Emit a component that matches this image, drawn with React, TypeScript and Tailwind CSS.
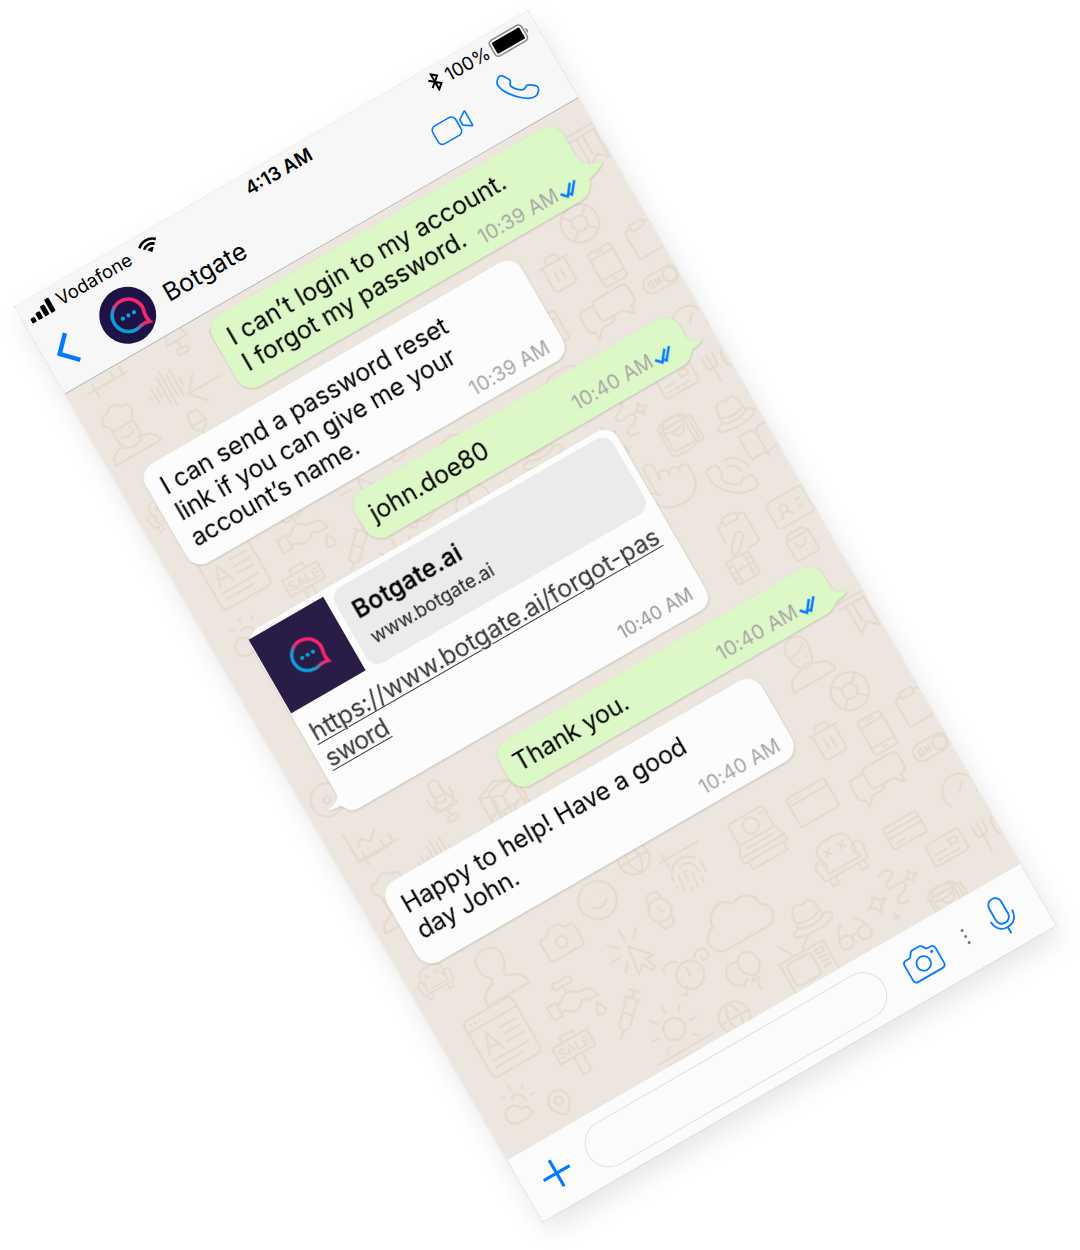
import type { ReactNode } from "react";
import {
  Bookmark, BookOpen, Camera, Clipboard, ClipboardPen, CloudSun,
  Disc, Film, Fingerprint, Gauge, Glasses, Globe, IdCard, Lamp, LifeBuoy, MapPin,
  Mic, PhoneCall, Pointer, ShoppingBag, Smile,
  Syringe, Trash2, Utensils, Watch, ChartLine, Wine,
} from "lucide-react";

const BLUE = "#0479ff";

/* ---------- wallpaper ---------- */

type Icon = typeof Bookmark;

const doodles: [Icon, number, number, number, number?][] = [
  [LifeBuoy, 531, 210, 46], [Trash2, 488, 241, 42],
  [Clipboard, 579, 254, 42], [Gauge, 576, 348, 42],
  [Utensils, 582, 403, 36], [Pointer, 478, 478, 62],
  [PhoneCall, 535, 507, 48], [BookOpen, 579, 490, 42], [IdCard, 571, 561, 50], [ClipboardPen, 513, 556, 46],
  [ShoppingBag, 563, 598, 34], [Film, 500, 590, 34],
  [Smile, 208, 805, 46], [Watch, 257, 845, 46],
  [Fingerprint, 300, 827, 40], [Globe, 260, 787, 38], [Camera, 156, 821, 46],
  [Glasses, 413, 961, 42], [Syringe, 179, 917, 46],
  [Globe, 268, 975, 38], [CloudSun, 38, 940, 44], [MapPin, 74, 962, 32],
  [Lamp, 124, 110, 34], [Wine, 101, 195, 38], [Mic, 123, 637, 44],
  [Disc, 24, 583, 40], [ChartLine, 37, 637, 44], [ShoppingBag, 513, 980, 38],
];

const Armchair = () => (
  <g>
    <path d="M-18 0v-12c0-8 5-11 18-11s18 3 18 11V0M-18 8v-4a6 6 0 1 0-9-5c0 4 2 5 2 8v6h50V7c0-3 2-4 2-8a6 6 0 1 0-9 5v4z" />
    <path d="M-20 13v8h7v-8M13 13v8h7v-8M-11-14l6 6M-5-14l-6 6M5-14l6 6M11-14l-6 6" />
  </g>
);

const hat = (
  <path d="M-14 6c0-14 2-21 8-21 3 0 4 2 7 2s4-2 7-1c5 2 5 10 6 20M-14 0c8 5 20 5 28 0M-14 6c8 5 20 5 28 0M-14 6c-12 2-9 8 0 9 9 2 22 2 29 0 9-2 10-8 0-10" />
);

const drawings: [number, number, number, ReactNode][] = [
  [439, 890, 1, <Armchair />],
  [27, 793, 0.68, <Armchair />],
  [318, 891, 1.08, <path d="M-22 20c-14-3-14-22 0-24C-22-20-2-26 5-14 16-20 28-12 26-2c12 6 8 22-4 22z" />],
  [382, 924, 1, hat],
  [568, 449, 0.95, hat],
  [581, 143, 1, <path d="M-18-14h34M-18-8h34M-11-8v32l10-9 10 9V-8M-4-8v20" />],
  [534, 260, 1, <path d="M-9-19h18q4 0 4 4v30q0 4-4 4h-18q-4 0-4-4v-30q0-4 4-4zM-13-12h26M-13 11h26M-3-16h6M-1 15h2" />],
  [573, 299, 1, <path d="M-10-9h20a9 9 0 0 1 0 18h-20a9 9 0 0 1 0-18zM3 0a7 7 0 0 1 14 0 7 7 0 0 1-14 0zM-13-3h4v6h-4zM-5 3v-6l4 6v-6" />],
  [512, 297, 1, <path d="M-6-13h28q7 0 7 7v9q0 7-7 7v9l-9-9H-6q-5 0-5-6v-11q0-6 5-6zM-11-9h-11q-6 0-6 6v12q0 6 6 6v9l8-9H-3q4 0 5-4" />],
  [537, 394, 1, <path d="M-16-12h32q3 0 3 3v18q0 3-3 3h-32q-3 0-3-3v-18q0-3 3-3zM5-6h8v6H5zM-14 1h12M-14 7h4M-6 7h4M2 7h8" />],
  [509, 898, 1, <path d="M-16-12h32q3 0 3 3v18q0 3-3 3h-32q-3 0-3-3v-18q0-3 3-3zM-19-6h38M-19 0h38M-14 7h10" />],
  [443, 828, 1, <path d="M-19-16h38q3 0 3 3v26q0 3-3 3h-38q-3 0-3-3v-26q0-3 3-3zM-22-8h44M-18-12h1M-13-12h1M-8-12h1" />],
  [506, 700, 1, <path d="M-12-9c-4-20 28-22 24 0M-10-8C-4-8 4-10 8-16M-11-8c0 22 22 22 22 0M-24 24c0-12 8-15 17-16M24 24c0-12-8-15-17-16M-24 24h48M-4-2v0M4-2v0M-3 5h6" />],
  [378, 831, 1, <path d="M-16-26h32q4 0 4 4v20h-40v-20q0-4 4-4zM-8-14a8 8 0 0 1 16 0 8 8 0 0 1-16 0zM13-20h3M-20-2l-5 12h50l-5-12M-15 4h30M-25 10h50v6h-50zM-20 16v9h40v-9" />],
  [86, 814, 1, <path d="M-26 28c0-12 6-13 15-17 3-2 2-5 0-7-4-4-6-9-5-15 1-8 6-12 14-12 9 0 14 5 14 13 0 6-3 11-6 14-2 2-2 5 1 7 9 4 15 5 15 17z" />],
  [251, 916, 1, <path d="M-14 0a14 14 0 0 1 28 0 14 14 0 0 1-28 0zM0 0v-9M-1 0a1 1 0 0 1 2 0M-9 0v0M9 0v0M-6-18c-6-6-14-2-16 2M12-13c4-7 14-5 14 1 0 8-9 8-8 2" />],
  [211, 866, 1, <path d="M0-6 18 14 9 14 14 25 9 27 4 17-4 24zM0-13v-11M-9-9-17-17M-12 0h-11M9-10l7-8M-8 8l-7 8" />],
  [89, 147, 1, <path d="M-17-3v6M-12-8v17M-7-5v10M-2-14v28M3-19v38M8-12v24M13-16v30M18-4v8" />],
  [178, 672, 1, <path d="M-22-14l20-8 22 8-20 9zM-22-14v26M20-14v26M0-5v16M-22 12c6-8 14-6 16 2v14M20 12c-6-8-14-6-16 2v14M-10-8v12" />],
  [358, 968, 1, <path d="M-25-16h50v34h-50zM-20-8c0-4 2-4 6-4H2c4 0 6 0 6 4V8c0 4-2 5-6 5h-16c-4 0-6-1-6-5zM13-11h8v5h-8zM13-2h8M13 3h8M13 8h8M-8-16l-8-15M0-16L14-27" />],
  [300, 940, 1, <path d="M-3-12a11 12 0 1 0 2 20M5-17a12 13 0 0 1 8 23c-8 5-16-3-16-11 0-6 3-11 8-12zM6 8l-5 5h9zM-5 10l-3 4M6 13c4 5-4 6 0 11" />],
  [137, 873, 1, <path d="M-27 0h10v15h-10zM-17 2h6c3-7 14-7 18 0 8 0 16 0 17 12H13c-1-3-3-3-6-3-5 7-14 7-18 1h-6M-2-4v-8M-12-14c0-5 6-4 10-2 4-2 11-3 11 2s-7 4-11 2c-4 2-10 3-10-2zM19 20c5 8 7 12 0 13-7-1-5-5 0-13z" />],
  [57, 876, 1, <path d="M-22-32h44q6 0 6 6v52q0 6-6 6h-44q-6 0-6-6v-52q0-6 6-6zM-28-20h56M-22-26h1M-17-26h1M-12-26h1M-20 10l8-22 8 22M-17 3h10M3-10h18M3-2h18M3 6h18M-20 16h41M-20 23h31" />],
  [210, 956, 1, <path d="M-11-1a11 11 0 0 1 22 0 11 11 0 0 1-22 0M-18-1h-8M18-1h8M0-19v-8M-12-14l-5-6M12-14l5-6M-13 12l-5 5M13 12l5 5M-32 22h64M-25 29h38M22-28l6 4 5-8" />],
  [469, 405, 1, <path d="M-6-20c12-6 20 4 8 8s-6 10 4 8 10 8 0 10-10 10 2 10M-24 0l3-7 3 7 7 3-7 3-3 7-3-7-7-3zM20-6l2-5 2 5 5 2-5 2-2 5-2-5-5-2zM-10 20v8M-14 24h8" />],
  [513, 442, 1, <path d="M-18-12a14 7 0 0 1 28 0 14 7 0 0 1-28 0zM-18-12v28q14 6 28 0M10-12h8v28h-8zM-7-12h6" />],
  [125, 162, 1, <path d="M18 0h-36l13-15M-18 0l13 15" />],
  [34, 162, 1, <path d="M-12-10c-8-4-4-15 4-13 4-6 13-6 16 0 9-1 11 9 4 13v5h-24zM-12-5v12c0 15 24 15 24 0V-5M-8 12c-10 2-18 4-18 14h52c0-10-8-12-18-14M-7 4c4 3 10 3 14 0M-5-1v0M5-1v0" />],
  [60, 112, 1, <path d="M-40 0h44M-32-6v14M-10-8v8M0-8v8" />],
  [250, 800, 1, <path d="M30 4h44M36-2v14" />],
  [180, 150, 1, <path d="M-14-30q14-10 28 0v46q-14 8-28 0zM-8-10h16" />],
  [62, 222, 1, <path d="M-16 10v-12q0-14 16-14t16 14v12M-9 0a4 4 0 0 1 8 0 4 4 0 0 1-8 0M3 0a4 4 0 0 1 8 0 4 4 0 0 1-8 0" />],
];

function repeat(v: number): number[] {
  if (v < 445) return [v, v + 540];
  if (v > 641) return [v, v - 540];
  return [v];
}

function Wallpaper() {
  return (
    <svg
      className="absolute inset-0 h-full w-full text-[#e5dbce]"
      viewBox="0 101 592 884"
      fill="none"
      stroke="currentColor"
      strokeWidth={2.3}
      strokeLinecap="round"
      strokeLinejoin="round"
    >
      {doodles.map(([Glyph, u, v, s, r], i) =>
        repeat(v).map((y) => (
          <g key={`${i}-${y}`} transform={`translate(${u} ${y}) rotate(${r ?? 0})`}>
            <Glyph x={-s / 2} y={-s / 2} size={s} strokeWidth={2.3} absoluteStrokeWidth />
          </g>
        )),
      )}
      {drawings.map(([u, v, s, art], i) =>
        repeat(v).map((y) => (
          <g key={`${i}-${y}`} transform={`translate(${u} ${y}) scale(${s})`}>
            {art}
          </g>
        )),
      )}
      {[924, 384].map((y) => (
        <g key={y} transform={`translate(114 ${y})`}>
          <path d="M-20-13h40v18h-40zM-5 5v20H4V5M-8-13v-6H7v6" />
          <text y="1.5" textAnchor="middle" fill="currentColor" stroke="none" className="font-['Inter'] text-[14px] font-semibold">
            SALE
          </text>
        </g>
      ))}
    </svg>
  );
}

/* ---------- small pieces ---------- */

function Logo({ size, id }: { size: number; id: string }) {
  return (
    <svg width={size} height={size} viewBox="-22 -22 44 44" fill="none">
      <defs>
        <linearGradient id={id} gradientUnits="userSpaceOnUse" x1="-11" y1="5" x2="7" y2="-4">
          <stop offset="0.2" stopColor="#0b9fd9" />
          <stop offset="0.75" stopColor="#f9256f" />
        </linearGradient>
      </defs>
      <path
        d="M5.4 15.2A16.2 16.2 0 1 1 15.2 5.6C14.4 8.6 14.4 11.4 15.6 15.8C11.2 14.4 8.6 14.4 5.4 15.2Z"
        stroke={`url(#${id})`}
        strokeWidth="3.6"
      />
      <g fill="#0aa5e0">
        <circle cx="-6.4" r="2.1" />
        <circle cx="0" r="2.1" />
        <circle cx="6.4" r="2.1" />
      </g>
    </svg>
  );
}

function Checks() {
  return (
    <svg width="21" height="14" viewBox="0 0 21 14" fill="none" stroke={BLUE} strokeWidth="2.5">
      <path d="M.8 6.2 6 11.8 14.5.8M9 10.2l1.6 1.8L19.8.8" />
    </svg>
  );
}

function Time({ children, read }: { children: ReactNode; read?: boolean }) {
  return (
    <span className="flex shrink-0 items-end whitespace-nowrap text-[20px] leading-5 tracking-[0.1px] text-[#aaa4a8]">
      {children}
      {read && (
        <span className="ml-[2px]">
          <Checks />
        </span>
      )}
    </span>
  );
}

function Tail({ big, className }: { big?: boolean; className: string }) {
  return (
    <svg className={`absolute left-full -ml-px overflow-visible ${className}`} width="22" height="34" viewBox="0 0 22 34">
      {big ? (
        <path d="M-3 0H1C1 8 4 16 10 17.5C14 19 18 20.5 22 21.5C18 25 12 28 1.5 30.5L-3 31Z" fill="#dcf8c6" />
      ) : (
        <path d="M-3 0H1C1 5 4 9 7 10C10 11 12 11.5 15 12C12 14 7 15.5 .5 16.5L-6 20Z" fill="#dcf8c6" />
      )}
    </svg>
  );
}

const shadow = "drop-shadow-[0_1.5px_0.8px_rgba(90,80,70,0.28)]";

/* ---------- page ---------- */

export default function App() {
  return (
    <div className="h-[1250px] w-[1080px] overflow-hidden bg-white pl-[15px] pt-[307px] font-['Inter',sans-serif]">
      <div className="flex h-[1056px] w-[592px] origin-top-left -rotate-30 flex-col bg-[#fcfbfc] text-black shadow-[0_12px_28px_rgba(0,0,0,0.1)] outline-1 outline-dotted outline-black/10">
        <header className="h-[101px] shrink-0 border-b border-[#b4b2b1] bg-[#f7f7f7]">
          <div className="grid h-[29px] grid-cols-3 items-center text-[18.5px] leading-5">
            <div className="flex items-center pl-[7px]">
              <svg width="28" height="16" viewBox="0 0 28 16" className="mt-[3px]">
                <rect x="0" y="10" width="5" height="5.5" rx="1.3" />
                <rect x="7.2" y="7.5" width="5" height="8" rx="1.3" />
                <rect x="14.4" y="4" width="5" height="11.5" rx="1.3" />
                <rect x="21.6" y="0" width="5" height="15.5" rx="1.3" />
              </svg>
              <span className="ml-[5px] tracking-[0.1px]">Vodafone</span>
              <svg width="21" height="15" viewBox="0 0 21 15" fill="none" stroke="black" strokeWidth="2.7" className="-mt-[2px] ml-[11px] shrink-0">
                <path d="M1 5.4C6.6.3 14.4.3 20 5.4M4.4 9C8 5.8 13 5.8 16.6 9" />
                <path d="M10.5 15 7 11.4c2-1.7 5-1.7 7 0z" fill="black" stroke="none" />
              </svg>
            </div>
            <div className="text-center text-[18.8px] font-semibold">4:13 AM</div>
            <div className="flex items-center justify-end pr-[8px]">
              <svg width="13" height="20" viewBox="0 0 12 18" fill="none" stroke="black" strokeWidth="1.8">
                <path d="M1 5l9.4 8-4.6 4V1l4.6 4L1 13" />
              </svg>
              <span className="ml-[6px] text-[18.5px]">100%</span>
              <svg width="43" height="20" viewBox="0 0 43 20" className="ml-[3px] mt-[2px]">
                <rect x="1" y="1" width="37" height="18" rx="4" fill="none" stroke="#8a8a8a" strokeWidth="1.6" />
                <rect x="3.6" y="3.6" width="31.8" height="12.8" rx="1.2" />
                <path d="M39.8 7.2c2.4 1 2.4 4.6 0 5.6z" fill="#8a8a8a" />
              </svg>
            </div>
          </div>

          <div className="flex h-[69px] items-center pl-[11.5px]">
            <svg width="20" height="34" viewBox="0 0 20 34" fill="none" stroke={BLUE} strokeWidth="4.4" className="-mt-px">
              <path d="M18.2 1.6 3.2 17l15 15.4" />
            </svg>
            <div className="ml-[33.5px] flex size-[57px] items-center justify-center rounded-full bg-[#1e1347]">
              <Logo size={44} id="logo-avatar" />
            </div>
            <div className="ml-[14px] mt-px text-[25px] leading-[30px] tracking-[0.15px]">Botgate</div>
            <svg width="41" height="25" viewBox="0 0 41 25" fill="none" stroke={BLUE} strokeWidth="1.6" strokeLinejoin="round" className="ml-auto">
              <rect x="1" y="2" width="26.5" height="20.5" rx="5" />
              <path d="M30.8 9.2 38.4 4.2q1-.5 1 .7v14.8q0 1.2-1 .7L30.8 15.4z" />
            </svg>
            <svg width="37" height="38" viewBox="528 41 37 38" fill="none" stroke={BLUE} strokeWidth="1.7" strokeLinejoin="round" className="-mt-[7px] ml-[38.5px] mr-[28px]">
              <path d="M537.5 42.6C538.8 43 542.6 49 543 51.2C543.2 53 541 54 540.8 55.6C540.8 59.6 547.5 66 551 65.9C552.5 65.7 553.5 63.8 555.2 63.9C557 64 563 68.6 563.6 70C564.6 73.5 560.5 77.4 557 77.8C553 78.2 547.5 75 543 70.7C538 66.5 533.5 60 531 54.5C529.8 51 529.3 48 531 46C533 43.6 535.5 42 537.5 42.6Z" />
            </svg>
          </div>
        </header>

        <main className="relative flex h-[884px] shrink-0 flex-col overflow-hidden bg-[#ede6df] pl-[24px] pr-[26px] pt-[7.5px] text-[25px] leading-[30px] tracking-[-0.15px]">
          <Wallpaper />

          <section className={`relative mr-[5px] flex h-[82px] w-[405px] shrink-0 items-end justify-between self-end rounded-[17px] bg-[#dcf8c6] pl-[14px] pr-[12px] ${shadow}`}>
            <p className="self-start whitespace-nowrap pt-[10.5px]">
              <span className="tracking-[-0.03px]">I can’t login to my account.</span>
              <br />I forgot my password.
            </p>
            <div className="-ml-20 pb-[8px]">
              <Time read>10:39 AM</Time>
            </div>
            <Tail big className="bottom-[11px]" />
          </section>

          <section className={`relative mt-[13px] flex h-[114.5px] w-[433.5px] shrink-0 items-end justify-between rounded-[16px] bg-[#fcfcfc] pl-[13.5px] pr-[15px] ${shadow}`}>
            <p className="self-start whitespace-nowrap pt-[11px] tracking-[-0.18px]">
              I can send a password reset
              <br />
              link if you can give me your
              <br />
              account’s name.
            </p>
            <div className="-ml-20 pb-[8.5px]">
              <Time>10:39 AM</Time>
            </div>
          </section>

          <section className={`relative mt-[14px] flex h-[53px] w-[374px] shrink-0 items-end justify-between self-end rounded-[17px] bg-[#dcf8c6] pl-[12.5px] pr-[18px] ${shadow}`}>
            <p className="self-start pt-[11px] tracking-[-0.05px]">john.doe80</p>
            <div className="pb-[11px]">
              <Time read>10:40 AM</Time>
            </div>
            <Tail className="bottom-[-8px]" />
          </section>

          <section className={`relative ml-[11px] mt-[14px] h-[207px] w-[422px] shrink-0 rounded-[15px] rounded-bl-[10px] bg-[#fcfcfc] pt-[6px] ${shadow}`}>
            <div className="flex pl-px">
              <div className="flex h-[85px] w-[86px] items-center justify-center bg-[#291d47]">
                <Logo size={43} id="logo-card" />
              </div>
              <div className="ml-[7px] h-[87px] w-[321px] rounded-[13px] bg-[#ebebeb] pl-[12.5px] pt-[13px]">
                <p className="text-[24.5px] font-medium leading-[30px] tracking-[0.4px] [-webkit-text-stroke:0.3px_black]">Botgate.ai</p>
                <p className="ml-[2px] mt-[6px] text-[19px] leading-6 tracking-[-0.05px] text-[#222]">www.botgate.ai</p>
              </div>
            </div>
            <p className="mt-[11px] pl-[8.5px] font-normal tracking-[-0.1px] text-[#383838] underline decoration-[1.3px] underline-offset-[3px]">
              https://www.botgate.ai/forgot-pas
              <br />
              <span className="tracking-[-0.7px]">sword</span>
            </p>
            <p className="absolute bottom-[10.5px] right-[14px] text-[18.8px] leading-5 tracking-[-0.1px] text-[#979797]">10:40 AM</p>
            <svg className="absolute bottom-0 right-full -mr-[16px] overflow-visible" width="32" height="40" viewBox="0 0 32 40">
              <path d="M16 0V14C16 20 15 23 .5 26.5C5 28.5 10 29 13 28.6C17 33 20 37 30 39V0Z" fill="#fcfcfc" />
            </svg>
          </section>

          <section className={`relative mt-[14px] flex h-[52px] w-[374px] shrink-0 items-end justify-between self-end rounded-[17px] bg-[#dcf8c6] pl-[12.5px] pr-[18px] ${shadow}`}>
            <p className="self-start pt-[10.5px] tracking-[-0.25px]">Thank you.</p>
            <div className="pb-[9px]">
              <Time read>10:40 AM</Time>
            </div>
            <Tail className="bottom-[-11px]" />
          </section>

          <section className={`relative mt-[14px] flex h-[93px] w-[433px] shrink-0 items-end justify-between rounded-[17px] bg-[#fcfcfc] pl-[13px] pr-[14px] ${shadow}`}>
            <p className="self-start whitespace-nowrap pt-[11.5px] tracking-[-0.15px]">
              Happy to help! Have a good
              <br />
              <span className="tracking-[-0.3px]">day John.</span>
            </p>
            <div className="-ml-20 pb-[9.5px]">
              <Time>10:40 AM</Time>
            </div>
          </section>
        </main>

        <footer className="flex h-[71px] items-center pl-[20px] pr-[28px]">
          <svg width="32" height="32" viewBox="0 0 32 32" stroke={BLUE} strokeWidth="3.2">
            <path d="M16 1v30M1 16h30" />
          </svg>
          <div className="ml-[19.5px] h-12 w-[342.5px] rounded-full border border-[#e0dfe0]" />
          <svg width="38" height="34" viewBox="441 1003 38 34" fill="none" stroke={BLUE} strokeWidth="1.8" strokeLinejoin="round" className="ml-[26px]">
            <path d="M446 1010.5H450C452.4 1010.5 452.6 1005 456 1004.8H464.5C468 1005 468 1010.5 470.4 1010.5H473.5Q477.8 1010.5 477.8 1014.5V1031Q477.8 1035.2 473.5 1035.2H446Q442 1035.2 442 1031V1014.5Q442 1010.5 446 1010.5Z" />
            <circle cx="459.8" cy="1021.8" r="7.3" />
            <circle cx="472.6" cy="1015.4" r="1.5" fill={BLUE} stroke="none" />
          </svg>
          <div className="ml-[28.5px] flex flex-col gap-[4.3px]">
            <i className="size-[3px] rounded-full bg-[#777]" />
            <i className="size-[3px] rounded-full bg-[#777]" />
            <i className="size-[3px] rounded-full bg-[#777]" />
          </div>
          <svg width="28" height="42" viewBox="537 1000 28 42" fill="none" stroke={BLUE} strokeWidth="1.8" className="ml-auto">
            <rect x="543.8" y="1001.2" width="14" height="27.3" rx="7" />
            <path d="M538.5 1020.5C539 1028.5 543.5 1033.3 550.8 1033.3S562.5 1028.5 563.2 1020.5M550.8 1033.3V1040.5" />
          </svg>
        </footer>
      </div>
    </div>
  );
}
